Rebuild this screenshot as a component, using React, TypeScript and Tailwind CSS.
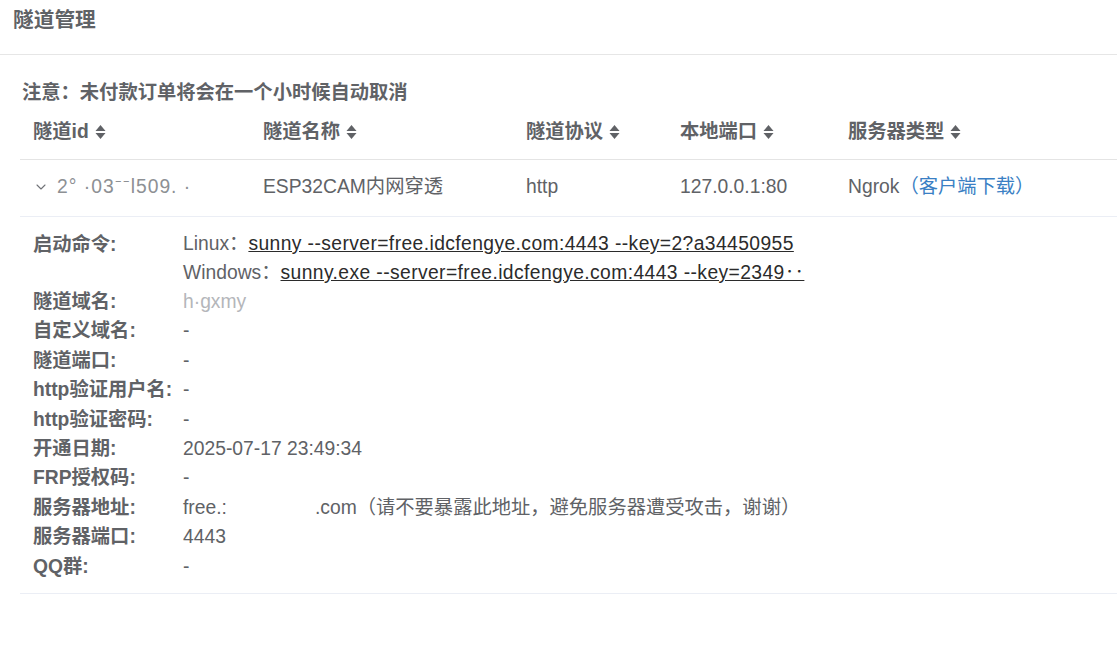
import { ChevronDown } from "lucide-react";

const font = { fontFamily: '"Liberation Sans", "Noto Sans CJK SC", sans-serif' };

function SortIcon() {
  return (
    <svg width="11" height="16" viewBox="0 0 11 16" className="ml-[6px] inline-block">
      <path d="M5.5 1 L10.5 7 L0.5 7 Z" fill="#606266" />
      <path d="M5.5 15 L10.5 9 L0.5 9 Z" fill="#606266" />
    </svg>
  );
}

const cols = [
  { label: "隧道id", w: "w-[230px]" },
  { label: "隧道名称", w: "w-[263px]" },
  { label: "隧道协议", w: "w-[154px]" },
  { label: "本地端口", w: "w-[168px]" },
  { label: "服务器类型", w: "flex-1" },
];

const details: [string, React.ReactNode][] = [
  ["隧道域名:", <span className="text-[#b4b6ba]">h·gxmy</span>],
  ["自定义域名:", "-"],
  ["隧道端口:", "-"],
  ["http验证用户名:", "-"],
  ["http验证密码:", "-"],
  ["开通日期:", "2025-07-17 23:49:34"],
  ["FRP授权码:", "-"],
  [
    "服务器地址:",
    <span>
      free.:<span className="inline-block w-[88px]" />.com（请不要暴露此地址，避免服务器遭受攻击，谢谢）
    </span>,
  ],
  ["服务器端口:", "4443"],
  ["QQ群:", "-"],
];

export default function App() {
  return (
    <div className="min-h-screen bg-white text-[#606266]" style={font}>
      {/* title bar */}
      <div className="h-[55px] pl-[13px] pt-[6px] border-b border-[#e6e6e6]">
        <h1 className="text-[20.7px] font-bold leading-[28px] text-[#5f6266]">隧道管理</h1>
      </div>

      <div className="pl-[20px]">
        <p className="pt-[25px] pl-[2px] text-[19.3px] font-bold leading-[26px]">注意：未付款订单将会在一个小时候自动取消</p>

        {/* table header */}
        <div className="flex h-[54px] items-center border-b border-[#e4e4e4] pb-[1px] text-[19.3px] font-bold">
          {cols.map((c) => (
            <div key={c.label} className={`${c.w} pl-[13px] flex items-center`}>
              {c.label}
              <SortIcon />
            </div>
          ))}
        </div>

        {/* row */}
        <div className="flex h-[57px] items-center border-b border-[#ebeef5] pb-[2px] text-[19.3px]">
          <div className="w-[230px] pl-[13px] flex items-center">
            <ChevronDown size={16} strokeWidth={1.6} className="text-[#707277]" />
            <span className="ml-[8px] text-[#8d9094] tracking-[1px]">2° ·03⁻⁻l509. ·</span>
          </div>
          <div className="w-[263px] pl-[13px]">ESP32CAM内网穿透</div>
          <div className="w-[154px] pl-[13px]">http</div>
          <div className="w-[168px] pl-[13px]">127.0.0.1:80</div>
          <div className="flex-1 pl-[13px]">
            Ngrok<span className="text-[#3a7fc4]">（客户端下载）</span>
          </div>
        </div>

        {/* expanded detail */}
        <div className="pt-[13px] pb-[12px] pl-[13px] border-b border-[#ebeef5] text-[19.3px] leading-[29.4px]">
          <div className="flex">
            <div className="w-[150px] shrink-0 font-bold">启动命令:</div>
            <div>
              <div className="leading-[28px] whitespace-nowrap">
                Linux：
                <span className="text-[#2b2b2b] underline tracking-[0.4px]">sunny  --server=free.idcfengye.com:4443 --key=2?a34450955</span>
              </div>
              <div className="leading-[29px] whitespace-nowrap">
                Windows：
                <span className="text-[#2b2b2b] underline tracking-[0.4px]">sunny.exe --server=free.idcfengye.com:4443 --key=2349‥</span>
              </div>
            </div>
          </div>
          {details.map(([k, v]) => (
            <div key={k} className="flex">
              <div className="w-[150px] shrink-0 font-bold whitespace-nowrap">{k}</div>
              <div>{v}</div>
            </div>
          ))}
        </div>
      </div>
    </div>
  );
}
